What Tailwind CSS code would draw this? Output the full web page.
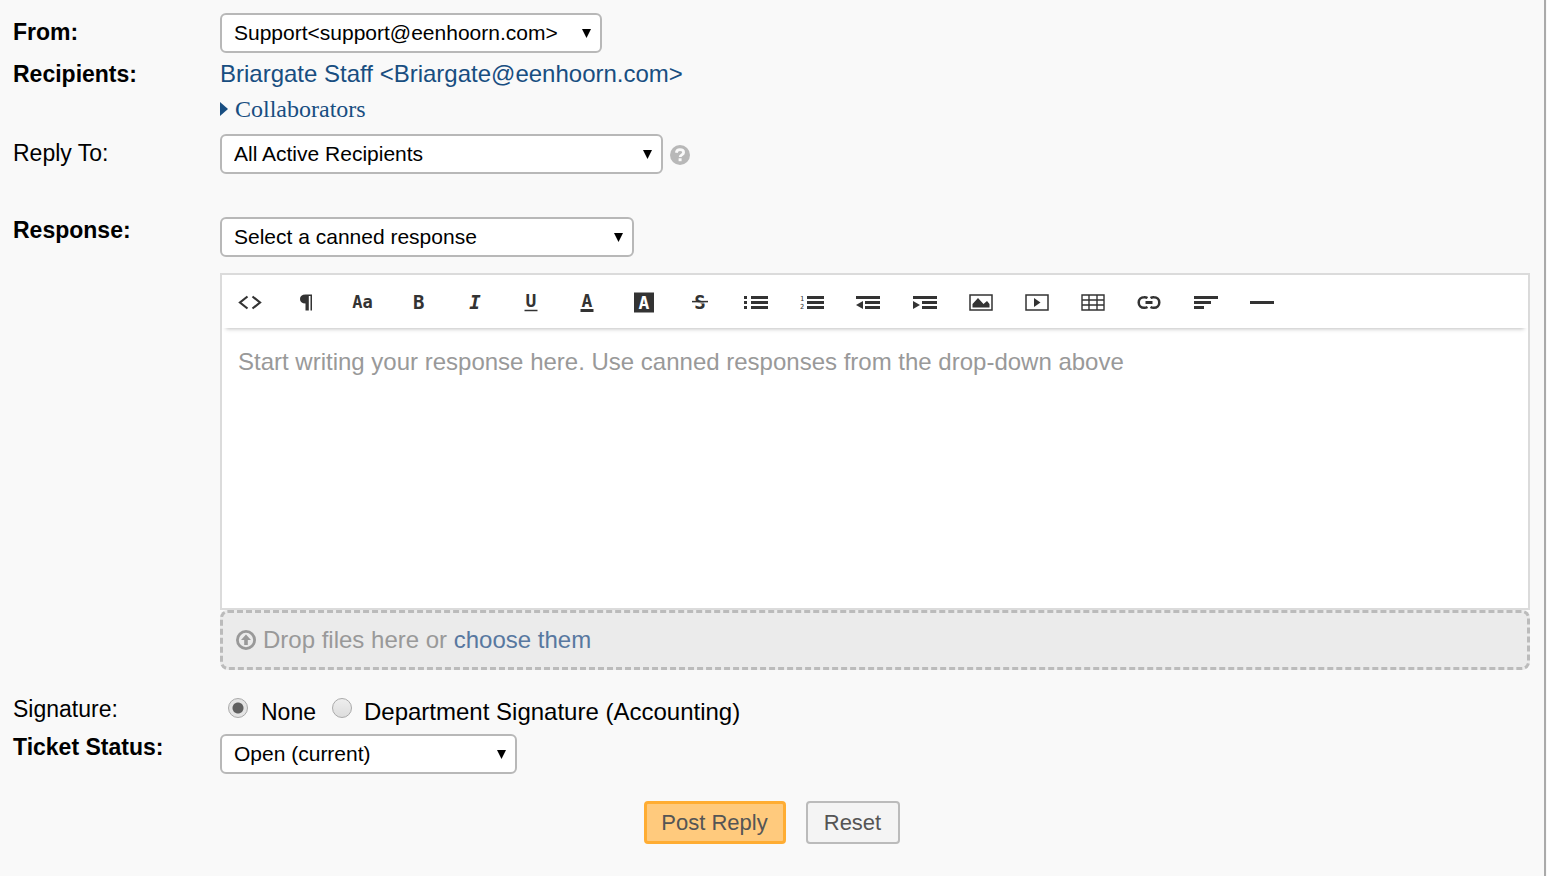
<!DOCTYPE html>
<html lang="en">
<head>
    <meta charset="UTF-8">
    <meta name="viewport" content="width=device-width, initial-scale=1.0">
    <title>Post Reply</title>
    <script src="https://cdn.jsdelivr.net/npm/@tailwindcss/browser@4"></script>
</head>
<body class="bg-[#f9f9f9] font-['Liberation_Sans',Arial,sans-serif] text-[23px] leading-7 text-black">

    <form class="mr-px min-h-screen border-r-2 border-[#aaa] pl-[13px] pr-[14px] pt-[13px]">

        <!-- Addressing -->
        <div class="grid grid-cols-[207px_1fr] items-start">
            <label for="from" class="pt-[5px] font-bold">From:</label>
            <div class="flex">
                <div class="relative">
                    <select id="from" class="h-10 w-[382px] appearance-none rounded-md border-2 border-[#b8b8b8] bg-white pl-3 text-[21px]">
                        <option>Support&lt;support@eenhoorn.com&gt;</option>
                    </select>
                    <svg class="pointer-events-none absolute right-[11px] top-4 size-[9px]" viewBox="0 0 9 9"><path d="M0 0h9L4.500 9z"/></svg>
                </div>
            </div>

            <div class="pt-[7px] font-bold">Recipients:</div>
            <div class="pt-[7px]">
                <a href="#" class="block text-2xl leading-7 text-[#184e81]">Briargate Staff &lt;Briargate@eenhoorn.com&gt;</a>
                <a href="#" class="mt-[7px] flex items-center gap-[7px] font-['Liberation_Serif',serif] text-2xl leading-7 text-[#184e81]">
                    <svg class="h-[14px] w-2" viewBox="0 0 8 14" fill="currentColor"><path d="M0 0l8 7-8 7z"/></svg>
                    Collaborators
                </a>
            </div>

            <label for="reply-to" class="mt-[11px] pt-[5px]">Reply To:</label>
            <div class="mt-[11px] flex items-center gap-[7px]">
                <div class="relative">
                    <select id="reply-to" class="h-10 w-[443px] appearance-none rounded-md border-2 border-[#b8b8b8] bg-white pl-3 text-[21px]">
                        <option>All Active Recipients</option>
                    </select>
                    <svg class="pointer-events-none absolute right-[11px] top-4 size-[9px]" viewBox="0 0 9 9"><path d="M0 0h9L4.500 9z"/></svg>
                </div>
                <a href="#" aria-label="Help" class="pt-0.5">
                    <svg class="size-5" viewBox="0 0 20 20"><circle cx="10" cy="10" r="10" fill="#b8b8b8"/><path d="M6.300 7.800C6.600 5.600 8 4.700 9.900 4.700c2.200 0 3.700 1.100 3.700 2.800 0 2.400-3.400 2.300-3.400 4.400" fill="none" stroke="#f9f9f9" stroke-width="2.800"/><path d="M8.600 13.300h3v2.900h-3z" fill="#f9f9f9"/></svg>
                </a>
            </div>
        </div>

        <!-- Response -->
        <div class="mt-[43px] grid grid-cols-[207px_1fr] items-start">
            <label for="canned" class="-mt-px font-bold">Response:</label>
            <div>
                <div class="flex">
                    <div class="relative">
                        <select id="canned" class="h-10 w-[414px] appearance-none rounded-md border-2 border-[#b8b8b8] bg-white pl-3 text-[21px]">
                            <option>Select a canned response</option>
                        </select>
                        <svg class="pointer-events-none absolute right-[11px] top-4 size-[9px]" viewBox="0 0 9 9"><path d="M0 0h9L4.500 9z"/></svg>
                    </div>
                </div>

                <div class="mt-4 border-2 border-[#dbdbdb] bg-white">
                    <div class="h-[53px] shadow-[0_5px_4px_-4px_rgba(0,0,0,0.25)]">
                        <div class="grid h-full w-full max-w-[1068px] grid-cols-19 items-center justify-items-center font-['DejaVu_Sans_Mono',monospace] text-[19px] font-bold leading-6 text-[#333]">
                            <button type="button" aria-label="HTML"><svg class="size-6" viewBox="0 0 24 24" fill="none" stroke="currentColor" stroke-width="2.200"><path d="M9.500 6.500L2 12.500l7.500 6M14.500 6.500l7.500 6-7.500 6"/></svg></button>
                            <button type="button" aria-label="Formatting"><svg class="size-6" viewBox="0 0 24 24" fill="currentColor"><path d="M18 4.500v16h-1.500V6h-1.700v14.500H11.500v-7C8 13.500 6 11.800 6 9s2-4.500 5.500-4.500z"/></svg></button>
                            <button type="button" class="text-[17px]">Aa</button>
                            <button type="button">B</button>
                            <button type="button" class="italic">I</button>
                            <button type="button" aria-label="Underline"><svg class="size-6" viewBox="0 0 24 24"><text x="12" y="17" text-anchor="middle" font-size="18" fill="currentColor">U</text><path d="M5.500 20.500h13" stroke="currentColor" stroke-width="1.500"/></svg></button>
                            <button type="button" aria-label="Text color"><svg class="size-6" viewBox="0 0 24 24"><text x="12" y="17" text-anchor="middle" font-size="18" fill="currentColor">A</text><path d="M5.500 20.500h13" stroke="currentColor" stroke-width="3"/></svg></button>
                            <button type="button" aria-label="Highlight"><svg class="size-6" viewBox="0 0 24 24"><path d="M2 2.500h20v20H2z" fill="currentColor"/><text x="12" y="19" text-anchor="middle" font-size="18" fill="#fff">A</text></svg></button>
                            <button type="button" aria-label="Strikethrough"><svg class="size-6" viewBox="0 0 24 24"><text x="12" y="19" text-anchor="middle" font-size="19" fill="currentColor">S</text><path d="M4 12.900h16" stroke="#fff" stroke-width="1"/><path d="M4 11.600h16" stroke="currentColor" stroke-width="1.500"/></svg></button>
                            <button type="button" aria-label="Unordered list"><svg class="size-6" viewBox="0 0 24 24" fill="currentColor"><path d="M0 6h3v3H0zM0 11h3v3H0zM0 16h3v3H0zM7 6h17v3H7zM7 11h17v3H7zM7 16h17v3H7z"/></svg></button>
                            <button type="button" aria-label="Ordered list"><svg class="size-6" viewBox="0 0 24 24" fill="currentColor"><text x="0" y="11" font-size="7" font-weight="400">1</text><text x="0" y="19" font-size="7" font-weight="400">2</text><path d="M7 6h17v3H7zM7 11h17v3H7zM7 16h17v3H7z"/></svg></button>
                            <button type="button" aria-label="Outdent"><svg class="size-6" viewBox="0 0 24 24" fill="currentColor"><path d="M0 6h24v3H0zM9 11h15v3H9zM9 16h15v3H9zM7 11v8l-7-4z"/></svg></button>
                            <button type="button" aria-label="Indent"><svg class="size-6" viewBox="0 0 24 24" fill="currentColor"><path d="M0 6h24v3H0zM9 11h15v3H9zM9 16h15v3H9zM0 11v8l7-4z"/></svg></button>
                            <button type="button" aria-label="Image"><svg class="size-6" viewBox="0 0 24 24" fill="currentColor"><path d="M1 5h22v15H1z" fill="none" stroke="currentColor" stroke-width="1.500"/><path d="M3.500 17.500V14L9 8l5.500 6 3.500-3 2.500 3v3.500z"/></svg></button>
                            <button type="button" aria-label="Video"><svg class="size-6" viewBox="0 0 24 24" fill="currentColor"><path d="M1 5h22v15H1z" fill="none" stroke="currentColor" stroke-width="1.500"/><path d="M9 8v9l6.500-4.500z"/></svg></button>
                            <button type="button" aria-label="Table"><svg class="size-6" viewBox="0 0 24 24" fill="none" stroke="currentColor" stroke-width="1.400"><path d="M1 5h22v15H1zM1 10h22M1 15h22M8 5v15M16 5v15"/></svg></button>
                            <button type="button" aria-label="Link"><svg class="size-6" viewBox="0 0 24 24" fill="none" stroke="currentColor" stroke-width="2.500"><path d="M10.500 8A5.500 5.500 0 0 0 7 7.200a5.300 5.300 0 0 0 0 10.600 5.500 5.500 0 0 0 3.500-.8M13.500 8a5.500 5.500 0 0 1 3.500-.8 5.300 5.300 0 0 1 0 10.600 5.500 5.500 0 0 1-3.500-.8"/><path d="M8.500 12.500h7" stroke-width="3"/></svg></button>
                            <button type="button" aria-label="Alignment"><svg class="size-6" viewBox="0 0 24 24" fill="currentColor"><path d="M0 6h24v3H0zM0 11h17v3H0zM0 16h10v3H0z"/></svg></button>
                            <button type="button" aria-label="Horizontal rule"><svg class="size-6" viewBox="0 0 24 24" fill="currentColor"><path d="M0 11h24v3H0z"/></svg></button>
                        </div>
                    </div>
                    <textarea aria-label="Response" placeholder="Start writing your response here. Use canned responses from the drop-down above" class="block h-[280px] w-full resize-none px-4 pt-5 text-2xl leading-7 outline-none placeholder:text-[#999]"></textarea>
                </div>

                <!-- Attachments -->
                <div class="flex h-[60px] items-center gap-[7px] rounded-lg border-3 border-dashed border-[#bbb] bg-[#ebebeb] px-[13px] text-2xl leading-7 text-[#999]">
                    <svg class="size-5" viewBox="0 0 20 20" fill="none" stroke="currentColor"><circle cx="10" cy="10" r="8.600" stroke-width="2.800"/><path d="M10 4.500l5 5.500h-3.200v5H8.200v-5H5z" fill="currentColor" stroke="none"/></svg>
                    <div>Drop files here or <a href="#" class="text-[#5878a0]">choose them</a></div>
                </div>
            </div>
        </div>

        <!-- Signature and status -->
        <div class="mt-[25px] grid grid-cols-[207px_1fr] items-start">
            <div>Signature:</div>
            <div class="flex h-[39px] items-start pl-2 pt-[3px]">
                <input type="radio" id="sig-none" name="signature" checked class="size-5 appearance-none rounded-full border border-[#aaa] bg-linear-to-b from-[#eee] to-[#ddd] checked:bg-[radial-gradient(circle,#606060_5px,#e4e4e4_6px)]">
                <label for="sig-none" class="ml-[13px]">None</label>
                <input type="radio" id="sig-dept" name="signature" class="ml-4 size-5 appearance-none rounded-full border border-[#aaa] bg-linear-to-b from-[#eee] to-[#ddd] checked:bg-[radial-gradient(circle,#606060_5px,#e4e4e4_6px)]">
                <label for="sig-dept" class="ml-3 text-2xl leading-7">Department Signature (Accounting)</label>
            </div>

            <label for="status" class="-mt-px font-bold">Ticket Status:</label>
            <div class="flex">
                <div class="relative">
                    <select id="status" class="h-10 w-[297px] appearance-none rounded-md border-2 border-[#b8b8b8] bg-white pl-3 text-[21px]">
                        <option>Open (current)</option>
                    </select>
                    <svg class="pointer-events-none absolute right-[11px] top-4 size-[9px]" viewBox="0 0 9 9"><path d="M0 0h9L4.500 9z"/></svg>
                </div>
            </div>
        </div>

        <div class="mt-[27px] flex justify-center gap-5 text-[22px] text-[#555]">
            <button type="submit" class="h-[43px] w-[142px] rounded border-3 border-[#ffad33] bg-[#ffca7d]">Post Reply</button>
            <button type="reset" class="h-[43px] w-[94px] rounded border-2 border-[#bbb] bg-[#f4f4f4]">Reset</button>
        </div>
    </form>

</body>
</html>
